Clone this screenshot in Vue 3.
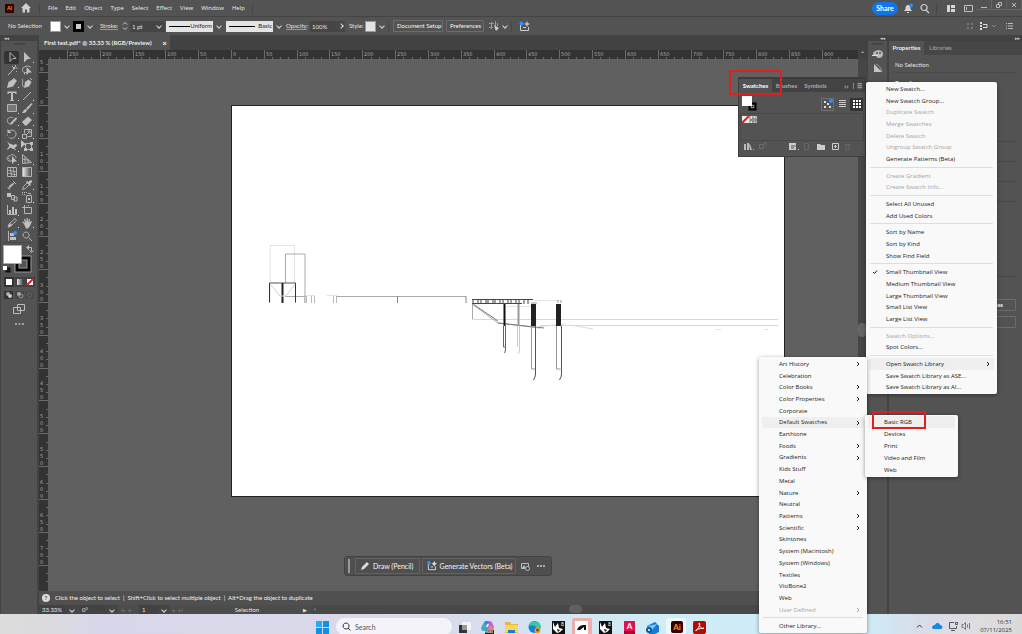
<script setup>
import { ref } from 'vue'

const menus = ['File', 'Edit', 'Object', 'Type', 'Select', 'Effect', 'View', 'Window', 'Help']

const tools = [
  { n: 'Selection', s: 'M4 1.5l6 6H6.8L4 10.500z', on: true },
  { n: 'Direct selection', f: 'M3 1l7 7H6.500L3 11.500z', m: true },
  { n: 'Magic wand', s: 'M2 11l6-6M9.500 1v2M11.500 4h-2M6 2l1 1M10 7l1 1', f: 'M7 3h2v2H7z' },
  { n: 'Lasso', s: 'M6 8.500C2 9 1 7 1.500 5 2 2 8 1 10 3.500M3.500 8v2.500', f: 'M5.500 3l5.500 5.500H8L5.500 11z' },
  { n: 'Pen', f: 'M1 11l1.500-6L7 2l3 3-3 4.500zM8 1l3 3-1 1-3-3z', m: true },
  { n: 'Curvature', f: 'M3 11l1-6 3.500-2.500L10.500 5 8 9.500z', s: 'M1 2c2 2-1 5 1.500 8M9 1l2 2' },
  { n: 'Type', f: 'M1.500 1.500h9v2.500h-1L9 3H7v7l1 .5v.5H4v-.5l1-.5V3H3l-.5 1h-1z', m: true },
  { n: 'Line', s: 'M2 10l8-8', m: true },
  { n: 'Rectangle', s: 'M1.500 2.500h9v7h-9z', g: true, m: true },
  { n: 'Paintbrush', f: 'M10.500 1l1 1-5 6L5 6.500zM4.500 7L6 8.500C5 11 3 11 1 11c1.500-1 1-3 3.500-4z', m: true },
  { n: 'Shaper', s: 'M7 3C3 1 1 4 1.500 6.500 2 9 5 10 7 8M5 9l6-6.500', f: 'M4.500 8l5-5.500 1.500 1.500-5 5-2 .5z', m: true },
  { n: 'Eraser', f: 'M1 7l6-5.500L11 5 5.500 10.500H4z', m: true },
  { n: 'Rotate', s: 'M2.500 3.500C5 1 10 2 10 6c0 3-3 5-6 4M1.500 6.500v1M2.500 9v.5', f: 'M1.500 1v4h4z', m: true },
  { n: 'Scale', s: 'M1.500 6.500h4v4h-4zM3.500 5.500v-4h7v7h-4M5 7l4-4M6.500 3H9v2.500', m: true },
  { n: 'Width', f: 'M1 1l3 3c2-1 2 1 3 1l3-1 1.500 2c-2 0-2 2-3.500 3-2 0-3-2-4-1l-3 2c0-2 3-3 2-5z', s: 'M7 8l3 2', m: true },
  { n: 'Free transform', s: 'M4.500 3.500h6v6h-6z', f: 'M0 0l6 5H3L0 8zM9 2h3v3H9zM9 8h3v3H9zM3 8h3v3H3z', m: false },
  { n: 'Shape builder', s: 'M5 3C2 2 0 5 2 7.500 4 9 6 8 7 6.500M5 2c3-1 5 1 5 3', f: 'M6 3l5 5.500H8.500L6 11zM2 5h1v1H2zM3.500 6.500h1v1h-1z', m: true },
  { n: 'Perspective grid', s: 'M1.500 1.500v9l9-1zM4 4v6M7 6.500V10M1.500 6l7 1.500', m: true },
  { n: 'Mesh', s: 'M1.500 1.500h9v9h-9zM1.500 5c3-2 6 2 9 0M1.500 8c3-2 6 2 9 0M5 1.500c-2 3 2 6 0 9M8 1.500c-2 3 2 6 0 9' },
  { n: 'Gradient', s: 'M1.500 1.500h9v9h-9z', g2: true },
  { n: 'Dimension', s: 'M2 10l7-7M7 2l3 3M1.500 8L4 10.500', f: 'M3 7l4-3 1 1-4 4z' },
  { n: 'Eyedropper', s: 'M1.500 10.500l1-3 4-4 2 2-4 4z', f: 'M6 2l1.500 1L9 1.500c2-1 3 1 1.500 2L9 5l1 1-1 1-4-4z', m: true },
  { n: 'Blend', s: 'M5.500 4.500h3v4h-3zM8 6h3v4H8z', f: 'M1 2h4v4H1z' },
  { n: 'Symbol sprayer', s: 'M5.500 4.500h5v7h-5zM7 2.500h3', f: 'M1 1h1v1H1zM3 1h1v1H3zM1 3h1v1H1zM3 3h1v1H3zM5 1h1v1H5zM7 7h2v2H7z', m: true },
  { n: 'Column graph', s: 'M1.500 1v9.500H11', f: 'M3 6h2v4H3zM6 3h2v7H6zM9 5h2v5H9z', m: true },
  { n: 'Artboard', s: 'M3.500 1v3M1 3.500h9.500v6h-7v-6M7 1.500h1' },
  { n: 'Slice', s: 'M2 10L3 7l6-5.500 1.500 2L5 9z', f: 'M4 6l2 2-4 3z', m: true },
  { n: 'Hand', f: 'M3 7L1 5l1-.5L4 6 3 2h1l1.500 3V1h1L7 5l1-3h1l-.5 4L10 4l1 .5L9 9l-2 2.500H5z', m: true },
  { n: 'Retype', s: 'M2.500 1v10', f: 'M4 3h4v3H4zM4 7h6v3H4z', b: true },
  { n: 'Zoom', s: 'M5 2a3 3 0 1 0 .1 0zM7.500 7.500L11 11' }
]

const hTicks = []
for (let i = -22; i < 76; i++) {
  hTicks.push({ x: Math.round(183 + i * 8.208), major: i % 4 === 0, label: Math.abs(i / 4) * 50 })
}
const vTicks = []
for (let i = -5; i < 59; i++) {
  vTicks.push({ y: Math.round(46 + i * 8.208), major: i % 4 === 0, label: String(Math.abs(i / 4) * 50).split('') })
}

const panelMenu = [
  ['New Swatch...', 'New Swatch Group...', '-Duplicate Swatch', '-Merge Swatches', '-Delete Swatch', '-Ungroup Swatch Group', 'Generate Patterns (Beta)'],
  ['-Create Gradient', '-Create Swatch Info...'],
  ['Select All Unused', 'Add Used Colors'],
  ['Sort by Name', 'Sort by Kind', 'Show Find Field'],
  ['✓Small Thumbnail View', 'Medium Thumbnail View', 'Large Thumbnail View', 'Small List View', 'Large List View'],
  ['-Swatch Options...', 'Spot Colors...'],
  ['*Open Swatch Library>', 'Save Swatch Library as ASE...', 'Save Swatch Library as AI...']
]
const libraryMenu = [
  ['Art History>', 'Celebration', 'Color Books>', 'Color Properties>', 'Corporate', '*Default Swatches>', 'Earthtone', 'Foods>', 'Gradients>', 'Kids Stuff', 'Metal', 'Nature>', 'Neutral', 'Patterns>', 'Scientific>', 'Skintones', 'System (Macintosh)', 'System (Windows)', 'Textiles', 'VisiBone2', 'Web', '-User Defined>'],
  ['Other Library...']
]
const defaultMenu = [['*Basic RGB', 'Devices', 'Print', 'Video and Film', 'Web']]

const rows = (groups) => groups.flatMap((group, i) => [
  ...(i ? [{ sep: true }] : []),
  ...group.map((t) => ({
    off: t[0] === '-',
    hot: t[0] === '*',
    tick: t[0] === '✓',
    more: t.endsWith('>'),
    label: t.replace(/^[-*✓]/, '').replace('>', '')
  }))
])
const popups = [
  { id: 'panel-menu', label: 'Swatches options', rows: rows(panelMenu) },
  { id: 'library-menu', label: 'Open Swatch Library', rows: rows(libraryMenu) },
  { id: 'default-menu', label: 'Default Swatches', rows: rows(defaultMenu) }
]

const weight = ref('1 pt')
const opacity = ref('100%')
const query = ref('')
const beams = [473, 478, 481, 486, 488, 493, 495, 500, 503, 508, 511, 516, 519, 524, 528]
</script>

<template>
  <div class="app">
    <header class="menubar">
      <svg class="ai" viewBox="0 0 10 10"><rect width="10" height="10" rx="1" fill="#330000" /><text x="5" y="7" text-anchor="middle" font-size="6" font-weight="700" fill="#ff9a00">Ai</text></svg>
      <button class="home" aria-label="Home"><svg width="10" height="10" viewBox="0 0 10 10"><path d="M5 0L0 5h1.500v4.500h2.500V6.500h2v3h2.500V5H10z" fill="#d0d0d0" /></svg></button>
      <i class="vline"></i>
      <nav class="menus"><button v-for="m in menus" :key="m">{{ m }}</button></nav>
      <i class="vline"></i>
      <div class="grow"></div>
      <button class="share">Share</button>
      <div class="topicons">
        <svg width="11" height="11" viewBox="0 0 11 11"><path d="M4 2c2 0 2.500 2 2.500 4L8 8H0l1.500-2c0-2 .5-4 2.500-4zM3 9h2v1H3z" fill="#d6d6d6" /><circle cx="7" cy="2.500" r="2" fill="#2b93ff" /></svg>
        <svg width="11" height="11" viewBox="0 0 11 11"><path d="M4 1.500a3 3 0 1 0 .1 0zM6 7l3 3" fill="none" stroke="#d6d6d6" stroke-width="1.200" /></svg>
        <i class="vline"></i>
        <svg class="lay" width="11" height="11" viewBox="0 0 11 11"><path d="M-1 2h4v7h-4zM4 2h4v3H4zM4 6h4v3H4z" fill="#d6d6d6" /></svg>
        <svg width="11" height="11" viewBox="0 0 11 11"><path d="M1.500 2.500h8v6h-8zM3.500 4v3" fill="none" stroke="#c0c0c0" /></svg>
      </div>
      <div class="winbtns">
        <button aria-label="Minimize"><svg width="8" height="8" viewBox="0 0 8 8"><path d="M1 6.500h6" /></svg></button>
        <button aria-label="Restore"><svg width="8" height="8" viewBox="0 0 8 8"><path d="M1.500 3.500h3v3h-3zM3.500 3V1.500h3v3H5" /></svg></button>
        <button aria-label="Close"><svg width="8" height="8" viewBox="0 0 8 8"><path d="M2 2l4 4M6 2L2 6" /></svg></button>
      </div>
    </header>

    <section class="control">
      <span class="nosel">No Selection</span>
      <button class="chip white" aria-label="Fill"></button><button class="chev" aria-label="Fill options"></button>
      <button class="chip strokechip" aria-label="Stroke color"></button><button class="chev" aria-label="Stroke options"></button>
      <label class="u strokelab" for="weight">Stroke:</label>
      <svg class="spin" width="6" height="10" viewBox="0 0 6 10"><path d="M1 3.500l2-2 2 2M1 6.500l2 2 2-2" /></svg>
      <input id="weight" v-model="weight" class="field w22"><button class="chev dark" aria-label="Stroke weights"></button>
      <button class="profile"><i></i><span>Uniform</span></button><button class="chev" aria-label="Profiles"></button>
      <button class="profile"><i class="long"></i><span>Basic</span></button><button class="chev" aria-label="Brushes"></button>
      <label class="u opacitylab" for="opacity">Opacity:</label>
      <input id="opacity" v-model="opacity" class="field w26"><button class="chev right" aria-label="Opacity options"></button>
      <span class="stylelab">Style:</span>
      <button class="chip grey" aria-label="Graphic style"></button><button class="chev" aria-label="Styles"></button>
      <i class="vline"></i>
      <button class="outlined setup">Document Setup</button>
      <button class="outlined prefs">Preferences</button>
      <svg class="ctl" width="10" height="10" viewBox="0 0 10 10"><path d="M0 2.500h5M0 6.500h4M2.500 1v7M6.500 0v9M8.500 2v3" stroke="#999" fill="none" /><path d="M5 4l5 3-3 3z" fill="#ccc" /></svg>
      <button class="chev" aria-label="Align options"></button>
      <i class="vline"></i>
      <svg class="gen" width="11" height="11" viewBox="0 0 11 11"><path d="M3 3.500H1.500v6h8V6M4 6.500h3" stroke="#ccc" fill="none" /><path d="M8 0l1 2 2 1-2 1-1 2-1-2-2-1 2-1z" fill="#bbb" /><circle cx="2.500" cy="2.500" r="2" fill="#2b93ff" /></svg>
      <div class="grow"></div>
      <svg width="50" height="10" viewBox="0 0 50 10" fill="none"><path d="M1 3h2M5 3h2M1 7h2M5 7h2" stroke="#777" stroke-width="2" /><path d="M15 1v8" stroke="#ddd" stroke-width="2" stroke-dasharray="2 1" /><path d="M17 3.500h4v3h-4" stroke="#ddd" /><path d="M26 4l2 2 2-2" stroke="#888" /><path d="M40 2.500h1M42 2.500h5M40 5h1M42 5h5M40 7.500h1M42 7.500h5" stroke="#bbb" /></svg>
    </section>

    <main class="work">
      <aside class="toolbox">
        <div class="strip">◂◂</div>
        <i class="grip"></i>
        <div class="tools">
          <button v-for="t in tools" :key="t.n" :aria-label="t.n" :class="{ on: t.on }">
            <svg width="12" height="12" viewBox="0 0 12 12">
              <defs v-if="t.g2"><linearGradient id="ramp"><stop offset="0" stop-color="#eee" /><stop offset="1" stop-color="#444" /></linearGradient></defs>
              <path v-if="t.s" :d="t.s" :fill="t.g2 ? 'url(#ramp)' : t.g ? '#777' : 'none'" stroke="#b4b4b4" />
              <path v-if="t.f" :d="t.f" fill="#c0c0c0" />
              <circle v-if="t.b" cx="9" cy="3" r="2" fill="#2b93ff" />
            </svg>
            <i v-if="t.m" class="more"></i>
          </button>
        </div>
        <svg class="colors" width="36" height="86" viewBox="0 0 36 86">
          <path d="M2 .5h31" stroke="#484848" />
          <rect x="14" y="14" width="16" height="16" fill="#000" stroke="#999" /><rect x="18" y="18" width="8" height="8" fill="#535353" stroke="#999" />
          <rect x="2.500" y="3.500" width="18" height="18" fill="#fff" stroke="#aaa" />
          <path d="M27 5.500h3.500v4M28.500 8.500l2 2 2-2" fill="none" stroke="#bbb" /><path d="M28 3v5l-3-2.500z" fill="#bbb" />
          <rect x="5.500" y="26.500" width="3" height="3" fill="none" stroke="#111" stroke-width="2" /><rect x="2" y="24" width="4" height="4" fill="#fff" />
          <rect x="3" y="35" width="10" height="10" fill="#333" /><rect x="5" y="37" width="6" height="6" fill="#fff" />
          <rect x="14" y="35" width="10" height="10" fill="#424242" /><rect x="16" y="37" width="6" height="6" fill="url(#ramp)" />
          <rect x="24" y="35" width="10" height="10" fill="#424242" /><rect x="26" y="37" width="6" height="6" fill="#fff" /><path d="M26 43l6-6" stroke="#e02020" stroke-width="2" />
          <rect x="3" y="49" width="9" height="8" fill="#333" /><circle cx="7" cy="52" r="2" fill="#aaa" /><circle cx="9" cy="54" r="2" fill="#ccc" />
          <rect x="14" y="49" width="9" height="8" fill="#484848" /><circle cx="18" cy="52" r="2" fill="#aaa" /><circle cx="20" cy="54" r="2" fill="none" stroke="#999" />
          <rect x="24" y="49" width="9" height="8" fill="#4b4b4b" /><circle cx="28.500" cy="53" r="2" fill="none" stroke="#666" />
          <path d="M12.500 65.500h7v6h-7zM16.500 62.500h7v6h-7z" fill="#535353" stroke="#bbb" />
          <path d="M14 82h2M17.500 82h2M21 82h2" stroke="#bbb" stroke-width="1.500" />
        </svg>
      </aside>

      <section class="document">
        <div class="tabs"><button class="doctab">First test.pdf* @ 33.33 % (RGB/Preview)<b>×</b></button></div>
        <div class="stage">
          <div class="corner"></div>
          <svg class="hruler" width="100%" height="9">
            <g v-for="t in hTicks" :key="t.x">
              <path :d="`M${t.x}.5 ${t.major ? 0 : 7}V9`" stroke="#6a6a6a" />
              <text v-if="t.major" :x="t.x + 2" y="6">{{ t.label }}</text>
            </g>
          </svg>
          <div class="vhead">⌃</div>
          <svg class="vruler" width="9" height="100%">
            <g v-for="t in vTicks" :key="t.y">
              <path :d="`M${t.major ? 0 : 7} ${t.y}.5H9`" stroke="#6a6a6a" />
              <template v-if="t.major"><text v-for="(c, i) in t.label" :key="i" x="1" :y="t.y - 1 - (t.label.length - 1 - i) * 7">{{ c }}</text></template>
            </g>
          </svg>
          <div class="canvas">
            <svg class="artboard" viewBox="232 106 552 390" fill="none" stroke="#555">
              <path d="M270 303V245.500h24.500V283" stroke="#e4e4e4" />
              <path d="M285.500 283v-29h19.500v49" stroke="#aaa" />
              <path d="M269.500 283h26" stroke="#555" /><path d="M285 296.500h21" stroke="#aaa" />
              <path d="M269.500 283v19.500M295.500 283v19.500" stroke="#333" /><path d="M282.500 283v20" stroke="#222" stroke-width="2" />
              <path d="M271 285l9 11h6l8-11" stroke="#d4d4d4" />
              <path d="M304.500 295v8M306.500 295v8M311.500 295v8M314.500 295v8" stroke="#bbb" /><path d="M305 295.500h10M327 295.500h10" stroke="#e4e4e4" />
              <path d="M333.500 296v7M336.500 296v7" stroke="#bbb" /><path d="M336 296.500h130" stroke="#aaa" /><path d="M397.500 296v7M466 296v7" stroke="#888" />
              <path d="M472 299.500h61M472 303.500h50" stroke="#444" />
              <path v-for="b in beams" :key="b" :d="`M${b} 299v5`" stroke="#444" />
              <path d="M472.500 304v16" stroke="#aaa" /><path d="M472 319.500h306M540 325.500h238" stroke="#d8d8d8" />
              <path d="M473 304l25 17" stroke="#777" /><path d="M472 304l26 19 42 5" stroke="#aaa" /><path d="M498 323l46 5" stroke="#777" />
              <path d="M535 327l30-3M570 325l23 4" stroke="#ddd" /><path d="M715 329.500h6M764 329.500h4M535 300.500h24M507 306.500h25" stroke="#e4e4e4" />
              <path d="M504.500 304v22" stroke="#111" stroke-width="2" /><path d="M503.500 326v21h2M505.500 326v24l-1 3" stroke="#666" />
              <path d="M518.500 304v22" stroke="#999" stroke-width="2" /><path d="M517.500 326v21M519.500 326v24l-1 4" stroke="#ccc" />
              <path d="M533.500 304v22M558.500 304v22" stroke="#222" stroke-width="5" />
              <path d="M531.500 326v43h4M556.500 326v43h4" stroke="#999" /><path d="M535.500 326v48q0 3-2 6M561.500 326v48q0 3-2 6" stroke="#555" />
              <path d="M531 303h6M558 303v-3M561 303v-3" stroke="#999" />
            </svg>
            <div class="contextbar">
              <i></i>
              <button class="outlined"><svg width="10" height="10" viewBox="0 0 10 10"><path d="M1 9l1-3 5-5 2 2-5 5z" fill="#ddd" /></svg>Draw (Pencil)</button>
              <button class="outlined long"><svg width="10" height="10" viewBox="0 0 11 11"><path d="M3 3.500H1.500v6h8V6M4 6.500h3" stroke="#ddd" fill="none" /><path d="M8 0l1 2 2 1-2 1-1 2-1-2-2-1 2-1z" fill="#ddd" /><circle cx="2" cy="2" r="2" fill="#2b93ff" /></svg>Generate Vectors (Beta)</button>
              <svg width="10" height="10" viewBox="0 0 10 10"><path d="M1.500 2.500h7v5h-7z" fill="none" stroke="#bbb" /><path d="M2 7l2-3 2 3z" fill="#bbb" /><circle cx="7.500" cy="7.500" r="2" fill="#444" stroke="#bbb" /></svg>
              <svg width="10" height="10" viewBox="0 0 10 10"><path d="M1 5h2M4 5h2M7 5h2" stroke="#ccc" stroke-width="1.500" /></svg>
            </div>
          </div>
          <div class="vscroll"><i></i></div>
        </div>
        <p class="hint"><b>?</b>Click the object to select &nbsp;|&nbsp; Shift+Click to select multiple object &nbsp;|&nbsp; Alt+Drag the object to duplicate</p>
        <div class="status">
          <button class="stat s1">33.33%</button><button class="chev dark" aria-label="Zoom levels"></button>
          <button class="stat s2">0°</button><button class="chev dark" aria-label="Rotation"></button>
          <span class="arrows">I◂&nbsp; ◂</span>
          <button class="stat s3">1</button><button class="chev dark" aria-label="Artboards"></button>
          <span class="arrows">▸&nbsp; ▸I</span>
          <span class="mode">Selection</span><span class="play">▶</span>
          <div class="hscroll"><span>‹</span><i></i></div>
        </div>
      </section>

      <aside class="dock">
        <div class="strip right">◂◂</div>
        <i class="grip"></i>
        <svg width="20" height="36" viewBox="0 0 20 36"><path d="M5 7c0-4 10-6 10 0 0 4-5 5-6 3s-4 0-4-3z" fill="#bbb" /><circle cx="9" cy="6" r="1" fill="#535353" /><circle cx="12" cy="6" r="1" fill="#535353" /><path d="M4 8.500h6" stroke="#ddd" /><path d="M6 17l8 8H6z" fill="#c4c4c4" /><path d="M8 17c3 1 5 4 6 8" stroke="#999" fill="none" /></svg>
      </aside>
      <aside class="properties">
        <div class="strip end">▸▸</div>
        <div class="ptabs"><button class="on">Properties</button><button>Libraries</button></div>
        <h2>No Selection</h2>
        <h3>Transform</h3>
        <div class="rule r1"></div><div class="rule r2"></div><div class="rule r2"></div><div class="rule r2"></div><div class="rule r3"></div>
        <button class="outlined pbtn first">Preferences</button>
        <button class="outlined pbtn" aria-label="Document"></button>
      </aside>
    </main>

    <footer class="taskbar">
      <div></div>
      <div class="center">
        <button class="cell" aria-label="Start"><svg width="13" height="13" viewBox="0 0 13 13"><path d="M0 0h6v6H0zM7 0h6v6H7zM0 7h6v6H0z" fill="#28aaf0" /><path d="M7 0h6v6H7zM0 7h6v6H0zM7 7h6v6H7z" fill="#1290e4" /></svg></button>
        <label class="search" for="search"><svg width="9" height="9" viewBox="0 0 9 9"><path d="M4 1a3 3 0 1 0 .1 0zM6 6l2.500 2.500" fill="none" stroke="#333" /></svg><input id="search" v-model="query" placeholder="Search"></label>
        <div class="apps">
          <button class="cell" aria-label="Task view"><svg width="13" height="13" viewBox="0 0 13 13"><path d="M4 1h9v8H4z" fill="#f4f4f4" /><path d="M1 4h8v8H1z" fill="#333" /><path d="M4 4h5v5H4z" fill="#999" /></svg></button>
          <button class="cell" aria-label="Copilot"><svg width="13" height="13" viewBox="0 0 13 13"><path d="M4 0h5L6 9 2 10C0 9 0 7 1 5z" fill="#2a8fe8" /><path d="M7 0h2c2 0 2 2 4 6 0 3-2 4-3 4H6z" fill="#c45be0" /><path d="M1 6l2-4 3 3-2 5H2z" fill="#35b4b0" /><path d="M9 4l4 3-2 3-4-2z" fill="#f37b73" /><path d="M6 3h2L7 6H5z" fill="#eef" /><path d="M4 9h9v4H4z" fill="#222" /><text x="4" y="12" font-size="3" font-weight="700" fill="#fff">M365</text></svg></button>
          <button class="cell" aria-label="File Explorer"><svg width="13" height="13" viewBox="0 0 13 13"><path d="M0 1h5l1 2h7v9H0z" fill="#f2b632" /><path d="M0 4h13v7H0z" fill="#ffd55a" /><path d="M3 9h7v3H3z" fill="#1680d8" /></svg></button>
          <button class="cell" aria-label="Edge"><svg width="13" height="13" viewBox="0 0 13 13"><circle cx="6.500" cy="6" r="6" fill="#1681d0" /><path d="M1 5c1-6 11-6 12 1 0 3-4 3-5 2 1-3-3-5-7-3z" fill="#3bc7a4" /><circle cx="9.500" cy="9.500" r="3" fill="#f1a22f" /><circle cx="9.500" cy="9" r="1.500" fill="#764a2d" /></svg></button>
          <button class="cell" aria-label="Rhino 8"><svg width="13" height="13" viewBox="0 0 13 13"><path d="M0 0h13v13H0z" fill="#111" /><path d="M1 1l2 5 3-4 1 5 4 1-3 3-3 1-4-4z" fill="#fff" /><path d="M5 8l3 1-2 2z" fill="#111" /><text x="9" y="5" font-size="5" fill="#fff">8</text></svg></button>
          <button class="cell pink" aria-label="Rhino"><svg width="13" height="13" viewBox="0 0 13 13"><path d="M0 0h13v13H0z" fill="#fff" /><path d="M2 9c2-5 5-5 9-5v5H9V6L5 9z" fill="#111" /></svg></button>
          <button class="cell" aria-label="Rhino 8 second"><svg width="13" height="13" viewBox="0 0 13 13"><path d="M0 0h13v13H0z" fill="#111" /><path d="M1 1l2 5 3-4 1 5 4 1-3 3-3 1-4-4z" fill="#fff" /><path d="M5 8l3 1-2 2z" fill="#111" /><text x="9" y="5" font-size="5" fill="#fff">8</text></svg></button>
          <button class="cell" aria-label="AutoCAD"><svg width="13" height="13" viewBox="0 0 13 13"><path d="M1 0h11v13H1z" fill="#e51050" /><path d="M1 10h11v3H1z" fill="#a80035" /><text x="6.500" y="8" text-anchor="middle" font-size="8" font-weight="700" fill="#fff">A</text></svg></button>
          <button class="cell" aria-label="Outlook"><svg width="13" height="13" viewBox="0 0 13 13"><path d="M1 5l8-4 4 4v6l-4 2H3z" fill="#1679d3" /><path d="M2 5l9-2-5 6z" fill="#7cc8fa" /><circle cx="3" cy="9" r="3" fill="#0c59a4" /><circle cx="3" cy="9" r="1" fill="#fff" /></svg></button>
          <button class="cell lit" aria-label="Illustrator"><svg width="13" height="13" viewBox="0 0 13 13"><rect x="1" width="12" height="12" rx="2" fill="#330000" /><text x="7" y="9" text-anchor="middle" font-size="8" font-weight="700" fill="#ff9a00">Ai</text></svg></button>
          <button class="cell" aria-label="Acrobat"><svg width="13" height="13" viewBox="0 0 13 13"><rect y="0" width="13" height="13" rx="2" fill="#b30b00" /><path d="M6 2c2 0 0 5-3 8-1-1 1-2 8-3-1 2-5-1-5-5z" fill="none" stroke="#fff" /></svg></button>
        </div>
      </div>
      <div class="tray">
        <svg width="56" height="10" viewBox="0 0 56 10" fill="none"><path d="M1 6.500l2.500-2.500L6 6.500" stroke="#333" /><path d="M17 8c-2-2 0-4 2-4 1-3 5-2 5 0 3 0 3 4 1 4z" fill="#128be8" /><path d="M38 1.500h-4.500v6h7V5M35 9.500h4M39.500 1.500h2v2h-2z" stroke="#555" /><path d="M46 3.500h1.500l2-2v7l-2-2H46zM51.500 3.500v3M53.500 2v6" stroke="#777" /></svg>
        <div class="clock">16:51<br>07/11/2025</div>
      </div>
    </footer>

    <section class="swatches" aria-label="Swatches panel">
      <div class="stabs"><button class="on">Swatches</button><button>Brushes</button><button>Symbols</button><span>››</span><i></i><button class="burger" aria-label="Panel menu">☰</button></div>
      <div class="srow">
        <svg width="16" height="16" viewBox="0 0 16 16"><rect x="7.500" y="7.500" width="6" height="6" fill="#535353" stroke="#000" stroke-width="2" /><rect x="9.500" y="9.500" width="2" height="2" fill="#000" stroke="#888" /><rect width="10" height="10" fill="#fff" /></svg>
        <div class="grow"></div>
        <button class="bordered" aria-label="Generative recolor"><svg width="10" height="10" viewBox="0 0 10 10"><path d="M1 2h2v2H1zM4 4h2v2H4zM1 7h2v2H1zM6 7h2v2H6z" fill="#ddd" /><circle cx="8" cy="2" r="2" fill="#2b93ff" /></svg></button>
        <button class="listbtn" aria-label="List view"><svg width="8" height="8" viewBox="0 0 8 8"><path d="M0 .5h7M0 2.500h7M0 4.500h7M0 6.500h7" stroke="#ccc" /></svg></button>
        <button class="dark" aria-label="Thumbnail view"><svg width="8" height="8" viewBox="0 0 8 8"><path d="M0 0h2v2H0zM3 0h2v2H3zM6 0h2v2H6zM0 3h2v2H0zM3 3h2v2H3zM6 3h2v2H6zM0 6h2v2H0zM3 6h2v2H3zM6 6h2v2H6z" fill="#fff" /></svg></button>
      </div>
      <div class="slist"><svg width="16" height="8" viewBox="0 0 16 8"><rect width="15" height="7" fill="#eee" /><path d="M0 7l7-7" stroke="#e02020" stroke-width="2" /><path d="M8 0v7M11 0v7M8 4h7M14 0v7" stroke="#777" /><circle cx="11.500" cy="4" r="2" fill="none" stroke="#777" /></svg></div>
      <svg class="sfoot" width="120" height="12" viewBox="0 0 120 12">
        <path d="M2 3h2v6H2zM5 2h2v7H5zM7 4l1-1 2 6H8zM11 8h1v1h-1z" fill="#bbb" /><path d="M17.500 3.500h4v4h-4zM21 2h3v3" fill="none" stroke="#6c6c6c" />
        <path d="M47 2h7v7h-7zM56 8h1v1h-1z" fill="#ccc" /><path d="M49 5h5M49 7h3" stroke="#555" /><path d="M62.500 2.500h4v6h-4z" fill="none" stroke="#666" />
        <path d="M75 3h3l1 1h4v5h-8z" fill="#ccc" /><path d="M90.500 2.500h6v6h-6zM93.500 4v3M92 5.500h3" fill="none" stroke="#ccc" /><path d="M104 4h3v5h-3zM103 3.500h6" fill="none" stroke="#666" />
      </svg>
    </section>

    <ul v-for="p in popups" :key="p.id" :class="['popup', p.id]" :aria-label="p.label">
      <li v-for="(r, i) in p.rows" :key="i" :class="{ sep: r.sep, hot: r.hot }">
        <button v-if="!r.sep" :disabled="r.off">
          <svg v-if="r.tick" class="tick" width="6" height="6" viewBox="0 0 6 6"><path d="M1 3l1.500 1.500L5 1.500" /></svg>
          {{ r.label }}
          <svg v-if="r.more" class="arrow" width="4" height="6" viewBox="0 0 4 6"><path d="M1 1l2 2-2 2" /></svg>
        </button>
      </li>
    </ul>
    <div class="mark mark-tab"></div>
    <div class="mark mark-item"></div>
  </div>
</template>

<style>
html, body { margin: 0; height: 100%; }
#app { height: 100%; }
</style>

<style scoped>
* { box-sizing: border-box; }
.app { position: relative; height: 100%; display: flex; flex-direction: column; overflow: hidden; background: #535353; color: #e2e2e2; font: 6px/8px Lato, "Open Sans", sans-serif; }
button, input { font: inherit; color: inherit; background: none; border: 0; padding: 0; margin: 0; white-space: nowrap; outline: 0; min-width: 0; }
svg { flex: none; display: block; }
.grow { flex: 1; }
.vline { width: 1px; height: 11px; background: #474747; flex: none; }

.menubar { height: 17px; flex: none; display: flex; align-items: center; border-bottom: 1px solid #444; padding-left: 5px; }
.ai { width: 9px; height: 9px; }
.home { margin: 0 8px 0 7px; }
.menus { display: flex; gap: 8px; font-family: "Open Sans", sans-serif; margin: 0 7px 1px 8px; color: #eee; }
.share { width: 26px; height: 13px; border-radius: 7px; background: #1473e6; font-size: 7px; font-weight: 700; color: #fff; }
.topicons { display: flex; align-items: center; gap: 5px; margin: 0 3px 0 6px; }
.lay { margin-left: 5px; }
.winbtns { display: flex; align-self: flex-start; }
.winbtns button { width: 15px; height: 10px; display: grid; place-items: center; border: solid #666; border-width: 0 1px 1px 0; }
.winbtns path { fill: none; stroke: #bbb; }

.control { height: 18px; flex: none; display: flex; align-items: center; padding: 0 6px 0 8px; }
.nosel { width: 42px; }
.chip { width: 11px; height: 11px; border: 1px solid #999; flex: none; }
.white { background: #fff; }
.grey { background: #e4e4e4; }
.strokechip { border: 3px solid #000; background: #ccc; }
.chev { width: 12px; height: 11px; flex: none; display: grid; place-items: center; }
.chev::after { content: ""; width: 3px; height: 3px; border: solid #d8d8d8; border-width: 0 1px 1px 0; rotate: 45deg; }
.chev.right::after { rotate: -45deg; }
.chev.right { width: 9px; background: #474747; }
.dark { background: #454545; }
.u { border-bottom: 1px solid #999; line-height: 7px; }
.strokelab { margin-left: 4px; width: 18px; }
.spin { margin: 0 2px 0 4px; }
.spin path { fill: none; stroke: #ccc; }
.field { background: #454545; height: 11px; padding-left: 2px; }
.w22 { width: 23px; }
.w26 { width: 26px; margin-left: 3px; }
.profile { width: 47px; height: 11px; background: #e4e4e4; color: #222; display: flex; align-items: center; justify-content: space-between; padding: 0 1px 0 3px; margin-left: 1px; }
.profile i { width: 21px; height: 1px; background: #000; }
.profile .long { width: 26px; }
.opacitylab { width: 21px; margin-left: 1px; }
.stylelab { width: 13px; margin: 0 3px 0 4px; }
.outlined { border: 1px solid #6c6c6c; border-radius: 1px; height: 12px; padding: 0 3px; color: #f4f4f4; }
.setup { width: 50px; margin: 0 3px 0 4px; }
.prefs { width: 38px; }
.ctl { margin-left: 5px; }
.gen { margin-left: 7px; }

.work { flex: 1; min-height: 0; display: flex; }
.strip { height: 6px; background: #424242; font: 5px/6px "DejaVu Sans", sans-serif; padding-left: 3px; color: #ccc; flex: none; }
.strip.right { padding-left: 12px; }
.strip.end { text-align: right; padding-right: 2px; }
.grip { display: block; width: 11px; height: 2px; background: #444; margin: 2px auto; flex: none; }
.toolbox { width: 39px; flex: none; border: solid #434343; border-width: 0 2px 0 1px; display: flex; flex-direction: column; }
.tools { margin: 4px 3px 0; height: 191px; display: grid; grid-template-columns: 1fr 1fr; grid-auto-rows: 1fr; flex: none; }
.tools button { position: relative; display: grid; place-items: center; min-height: 0; overflow: hidden; }
.tools svg { margin: -1px; }
.tools .on { background: #333; border-radius: 2px; }
.more { position: absolute; right: 0; bottom: 1px; width: 1px; height: 1px; background: #ddd; }

.document { flex: 1; min-width: 0; display: flex; flex-direction: column; }
.tabs { height: 15px; background: #424242; }
.doctab { width: 131px; height: 15px; background: #535353; text-align: left; padding-left: 5px; font-weight: 700; color: #eee; display: flex; align-items: center; }
.doctab b { margin: 0 3px 0 auto; font-size: 8px; }
.stage { flex: 1; min-height: 0; display: grid; grid-template: 9px 1fr / 9px 1fr 9px; background: #606060; }
.corner, .hruler, .vruler { background: #333; }
.hruler text, .vruler text { fill: #a6a6a6; font: 5px "DejaVu Sans", sans-serif; }
.vhead { background: #424242; text-align: center; }
.canvas { position: relative; overflow: hidden; }
.artboard { position: absolute; left: 183px; top: 46px; width: 554px; height: 392px; background: #fff; border: 1px solid #222; }
.contextbar { position: absolute; left: 296px; bottom: 15px; height: 20px; width: 208px; display: flex; align-items: center; gap: 2px; padding: 0 3px; background: #4f4f4f; border: 1px solid #434343; border-radius: 3px; font-size: 7px; }
.contextbar i { width: 2px; height: 14px; background: #999; margin-right: 3px; }
.contextbar .outlined { height: 16px; width: 65px; display: flex; align-items: center; gap: 3px; padding: 0 4px; border-color: #626262; }
.contextbar .long { width: 95px; }
.contextbar > svg { margin: 0 2px; }
.vscroll { background: #464646; display: flex; flex-direction: column; }
.vscroll i { width: 8px; height: 14px; border-radius: 4px; background: #666; margin-top: 264px; }
.hint { margin: 0; height: 14px; background: #505050; display: flex; align-items: center; padding-left: 3px; white-space: pre; color: #f0f0f0; }
.hint b { width: 8px; height: 8px; border-radius: 4px; background: #ddd; color: #444; text-align: center; margin-right: 5px; }
.status { height: 9px; display: flex; align-items: center; background: #4c4c4c; overflow: hidden; }
.stat { height: 9px; background: #424242; text-align: left; padding-left: 3px; }
.s1 { width: 27px; }
.s2 { width: 27px; margin-left: 1px; }
.s3 { width: 19px; }
.arrows { width: 18px; margin-left: 3px; color: #777; font-size: 5px; }
.mode { width: 112px; text-align: center; }
.play { width: 8px; font-size: 5px; }
.hscroll { flex: 1; height: 9px; background: #484848; display: flex; }
.hscroll span { width: 258px; padding-left: 3px; }
.hscroll i { width: 13px; height: 8px; border-radius: 4px; background: #606060; }

.dock { width: 22px; flex: none; border: solid #434343; border-width: 0 2px 0 1px; }
.properties { width: 133px; flex: none; }
.ptabs { height: 14px; display: flex; background: #464646; color: #aaa; }
.ptabs button { width: 33px; }
.ptabs .on { width: 35px; background: #535353; color: #eee; font-weight: 700; }
h2, h3 { font: inherit; margin: 0 6px; }
h2 { height: 18px; line-height: 20px; border-bottom: 1px solid #4a4a4a; }
h3 { line-height: 19px; height: 48px; font-weight: 700; }
.rule { margin: 0 6px; border-top: 1px solid #474747; }
.r1 { margin-top: 20px; height: 20px; }
.r2 { height: 20px; }
.r3 { height: 1px; margin-top: 55px; }
.pbtn { display: block; width: 121px; margin: 5px 6px 0; text-align: right; padding-right: 12px; }
.first { margin-top: 22px; font-weight: 700; }

.taskbar { height: 20px; flex: none; display: grid; grid-template-columns: 1fr auto 1fr; background: linear-gradient(90deg, #dcdcdc 0%, #dbdbdf 5%, #d8d8ea 9%, #d9d9ea 42%, #d3e7f2 55%, #cfedf8 66%, #cfe9f5 86%, #d9dcea 90%, #dedcdf 96%, #dadada 100%); color: #222; }
.center { display: flex; padding-top: 4px; height: 20px; }
.cell { width: 20px; height: 18px; display: grid; place-items: center; border-radius: 2px; flex: none; }
.pink { background: #edafac; }
.lit { background: #edf6fa; }
.search { width: 116px; height: 17px; margin: 0 2px 0 4px; border-radius: 9px; background: #f4f3fa; display: flex; align-items: center; padding-left: 6px; gap: 4px; font-size: 7px; }
.search input { width: 80px; }
.search input::placeholder { color: #555; opacity: 1; }
.apps { display: flex; justify-content: space-between; width: 256px; }
.tray { display: flex; align-items: flex-start; justify-content: flex-end; gap: 8px; padding: 4px 10px 0 0; }
.tray svg { margin-top: 3px; }
.clock { font-family: "Open Sans", sans-serif; line-height: 8px; text-align: right; color: #333; }

.swatches { position: absolute; left: 738px; top: 77px; width: 128px; height: 80px; background: #535353; border: 1px solid #3c3c3c; border-top-width: 2px; display: flex; flex-direction: column; }
.stabs { height: 13px; background: #434343; display: flex; align-items: center; color: #aaa; font-weight: 700; flex: none; }
.stabs button { width: 29px; height: 13px; }
.stabs .on { width: 33px; background: #535353; color: #fff; }
.stabs span { margin-left: 14px; width: 9px; font-size: 8px; line-height: 6px; }
.stabs i { width: 1px; height: 6px; background: #888; }
.stabs .burger { width: 8px; margin-left: 1px; }
.srow { display: flex; align-items: center; padding: 3px 2px 0 3px; height: 21px; flex: none; }
.srow button { width: 13px; height: 13px; display: grid; place-items: center; margin-left: 1px; }
.srow .listbtn { margin-left: 2px; }
.bordered { border: 1px solid #707070; }
.srow .dark { background: #333; }
.slist { height: 28px; margin: 0 1px; border: 1px solid #494949; padding: 2px 1px; flex: none; }
.sfoot { margin: 0 3px; }

.popup { position: absolute; margin: 0; padding: 1px 3px; list-style: none; background: #f9f9f9; border-radius: 2px; box-shadow: 0 1px 4px #0006; display: flex; flex-direction: column; color: #1a1a1a; font-family: "Open Sans", sans-serif; }
.popup li { flex: 1; min-height: 0; display: flex; border-radius: 2px; }
.popup .hot { background: #efefef; }
.popup .sep { flex: none; height: 1px; margin: 2px 1px; background: #ddd; }
.popup button { position: relative; flex: 1; text-align: left; padding-left: 17px; }
.popup button:disabled { color: #a4a4a4; }
.popup path { fill: none; stroke: currentColor; }
.arrow { position: absolute; right: 4px; top: 3px; }
.tick { position: absolute; left: 3px; top: 3px; }
.panel-menu { left: 866px; top: 82px; width: 131px; height: 312px; }
.library-menu { left: 759px; top: 357px; width: 108px; height: 276px; }
.default-menu { left: 865px; top: 415px; width: 93px; height: 62px; }
.default-menu button { padding-left: 16px; }
.mark { position: absolute; border: 2px solid #e02020; }
.mark-tab { left: 729px; top: 70px; width: 53px; height: 25px; }
.mark-item { left: 872px; top: 411px; width: 54px; height: 18px; }
</style>
